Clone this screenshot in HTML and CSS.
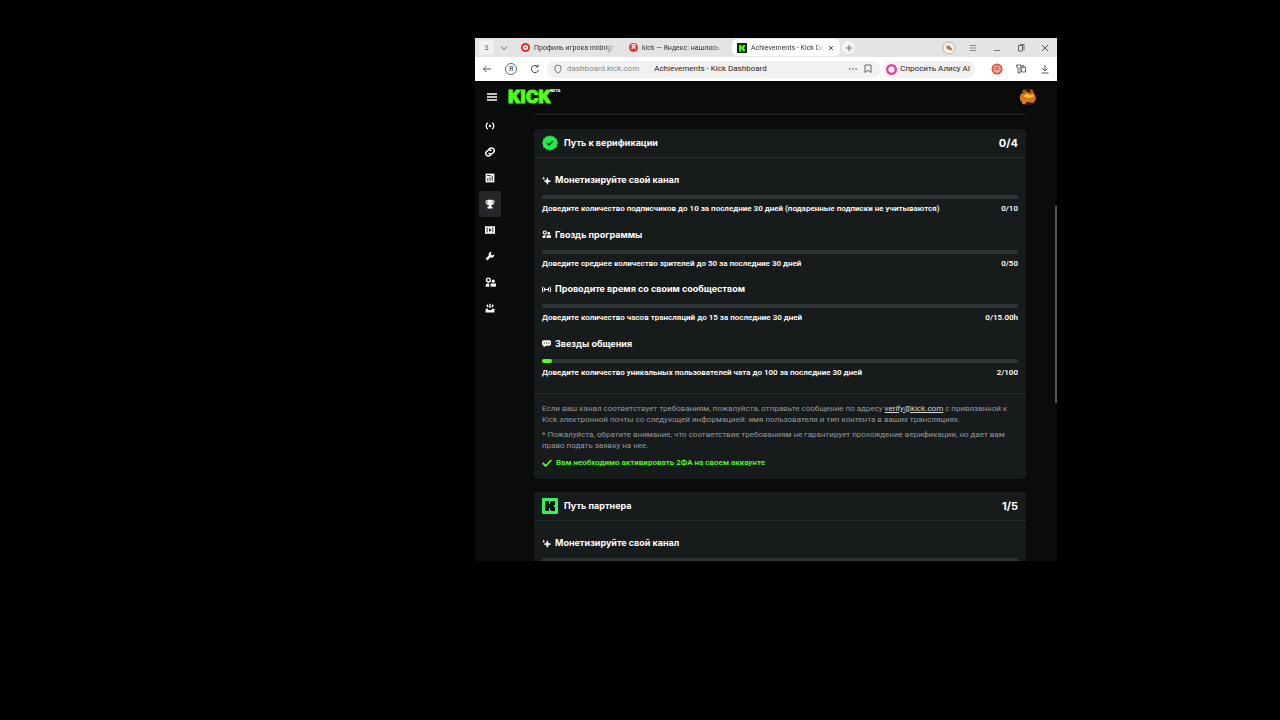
FILE: index.html
```html
<!DOCTYPE html>
<html lang="ru">
<head>
<meta charset="utf-8">
<title>Achievements - Kick Dashboard</title>
<link rel="stylesheet" href="styles.css">
</head>
<body>
<svg class="defs" aria-hidden="true">
  <symbol id="spark" viewBox="0 0 16 16"><path d="M9.500 3l1.600 4.400L15.500 9l-4.400 1.600L9.500 15l-1.600-4.400L3.500 9l4.400-1.600z" fill="currentColor" stroke="currentColor"/><path d="M3 1l.8 2.200L6 4l-2.200.8L3 7l-.8-2.200L0 4l2.200-.8z" fill="currentColor"/></symbol>
  <symbol id="people" viewBox="0 0 16 16"><circle cx="5" cy="4.500" r="2.800" fill="none" stroke="currentColor" stroke-width="2"/><path d="M1 14v-2c0-1.700 1.200-2.700 3-2.700h2V14z" fill="currentColor"/><circle cx="12" cy="6" r="2.300" fill="currentColor"/><path d="M8 9.500h8V14H8z" fill="currentColor"/></symbol>
  <symbol id="live" viewBox="0 0 16 16"><path d="M4.500 3C1 5 1 11 4.500 13M11.500 3c3.500 2 3.500 8 0 10" fill="none" stroke="currentColor" stroke-width="2"/><path d="M5.500 8L8 5.500 10.500 8 8 10.500z" fill="currentColor"/></symbol>
  <symbol id="waves" viewBox="0 0 16 16"><path d="M2 3c-1.300 3-1.300 7 0 10M5 5c-.8 2-.8 4 0 6M14 3c1.300 3 1.300 7 0 10M11 5c.8 2 .8 4 0 6M5 8h6" fill="none" stroke="currentColor" stroke-width="1.800"/></symbol>
  <symbol id="mark" viewBox="0 0 16 16"><rect width="16" height="16" rx="1" fill="#33f35b"/><path d="M3 3h4v3h1V4h1V3h4v4h-1v2h1v4H9v-1H8v-2H7v3H3z" fill="#08120c"/></symbol>
</svg>
<div class="stage">
<div class="window">
  <div class="tabs">
    <button class="count">3</button>
    <button class="chev" aria-label="Вкладки"><svg width="8" height="8" viewBox="0 0 8 8"><path d="M1 2.500l3 3 3-3" fill="none" stroke="#666"/></svg></button>
    <a class="tab" href="#"><svg width="9" height="9" viewBox="0 0 9 9"><circle cx="4.500" cy="4.500" r="3.500" fill="#fff" stroke="#e02d31" stroke-width="2"/><circle cx="4.500" cy="4.500" r="1" fill="#e02d31"/></svg><span>Профиль игрока midnight</span></a>
    <a class="tab" href="#"><i class="ya">Я</i><span>kick — Яндекс: нашлось 1</span></a>
    <div class="tab active"><svg width="10" height="10" viewBox="0 0 10 10"><rect width="10" height="10" fill="#10260c"/><path d="M2 2h2.500v2H5V3h1V2h2v2H7v2h1v2.500H6v-1H5V6h-.5v2.500H2z" fill="#42f51f"/></svg><a href="#">Achievements - Kick Da</a><button aria-label="Закрыть вкладку"><svg width="6" height="6" viewBox="0 0 6 6"><path d="M1 1l4 4M5 1L1 5" stroke="#555"/></svg></button></div>
    <button class="plus" aria-label="Новая вкладка"><svg width="8" height="8" viewBox="0 0 8 8"><path d="M4 1v6M1 4h6" stroke="#666"/></svg></button>
    <div class="controls">
      <button aria-label="Профиль"><svg width="14" height="14" viewBox="0 0 14 14"><circle cx="7" cy="7" r="6" fill="#f7f4f0" stroke="#bbb3b6"/><path d="M4 5l3-.5L10.500 8 9 9.500 5 8z" fill="#ad7a4b"/></svg></button>
      <button aria-label="Меню"><svg width="8" height="8" viewBox="0 0 8 8"><path d="M1 1.500h6M1 4h6M1 6.500h6" stroke="#888"/></svg></button>
      <button aria-label="Свернуть"><svg width="8" height="8" viewBox="0 0 8 8"><path d="M1 6.500h6" stroke="#777"/></svg></button>
      <button aria-label="Развернуть"><svg width="8" height="8" viewBox="0 0 8 8"><path d="M1.500 1.500h4v5.500h-4zM3 .5h4V6" fill="none" stroke="#666"/></svg></button>
      <button aria-label="Закрыть"><svg width="8" height="8" viewBox="0 0 8 8"><path d="M1 1l6 6M7 1L1 7" stroke="#555"/></svg></button>
    </div>
  </div>
  <div class="toolbar">
    <div class="nav">
      <button aria-label="Назад"><svg width="10" height="10" viewBox="0 0 10 10"><path d="M9 5H1.500M4.500 2l-3 3 3 3" fill="none" stroke="#555"/></svg></button>
      <button aria-label="Яндекс" class="home">Я</button>
      <button aria-label="Обновить"><svg width="10" height="10" viewBox="0 0 10 10"><path d="M8.500 6A3.600 3.600 0 1 1 7.500 2.400M8 .5v2.500H5.500" fill="none" stroke="#444"/></svg></button>
    </div>
    <div class="address">
      <svg width="8" height="10" viewBox="0 0 8 10"><path d="M4 1l3 1v3.500Q6.500 8 4 9 1.500 8 1 5.500V2z" fill="none" stroke="#777"/></svg>
      <span class="url">dashboard.kick.com</span><span class="pagetitle">Achievements - Kick Dashboard</span>
      <button class="dots" aria-label="Ещё"><svg width="10" height="4" viewBox="0 0 10 4"><path d="M1 2h1.500M4.300 2h1.500M7.500 2H9" stroke="#777" stroke-width="1.300"/></svg></button>
      <button aria-label="Закладка"><svg width="8" height="10" viewBox="0 0 8 10"><path d="M1 1h6v7.500L4 6.300 1 8.500z" fill="none" stroke="#666"/></svg></button>
    </div>
    <button class="alice"><svg width="11" height="11" viewBox="0 0 11 11"><circle cx="5.500" cy="5.500" r="4.300" fill="#fff" stroke="#eb3f9b" stroke-width="2.400"/></svg>Спросить Алису AI</button>
    <div class="tools">
      <button aria-label="Расширение"><svg width="12" height="12" viewBox="0 0 12 12"><circle cx="6" cy="6" r="5.500" fill="#e8533f"/><rect x="3" y="3" width="6" height="6" rx="2" fill="none" stroke="#ffd2c7"/><path d="M4.500 5.500h1M6.500 5.500h1M4.500 7.500h3" stroke="#fff" stroke-width=".8"/></svg></button>
      <button aria-label="Расширения"><svg width="10" height="10" viewBox="0 0 10 10"><path d="M.5 1h4.500v2L4 3.500V9H2V3.500L.5 3zM6 3V1.500h2V3M5.500 3.500h4V8h-4z" fill="none" stroke="#555" stroke-width=".9"/></svg></button>
      <button aria-label="Загрузки"><svg width="10" height="10" viewBox="0 0 10 10"><path d="M5 1v6M2.500 4.500L5 7l2.500-2.500M1.500 9h7" fill="none" stroke="#555"/></svg></button>
    </div>
  </div>
  <div class="app">
    <header class="top">
      <button class="burger" aria-label="Меню"><svg width="10" height="8" viewBox="0 0 10 8"><path d="M0 1h10M0 4h10M0 7h10" stroke="#fff" stroke-width="1.300"/></svg></button>
      <a class="logo" href="#">KICK<sup>BETA</sup></a>
      <button class="avatar" aria-label="Аккаунт"><svg width="18" height="18" viewBox="0 0 18 18"><circle cx="9" cy="9" r="8.500" fill="#3a1807"/><path d="M1 8q1-3 4-3l2-2 3 2 4-1 2 4 1 3-3 4-5-1-5 1-3-3z" fill="#d97813"/><path d="M4 8l4-2 3 1 4 0-1 2-4 1-4-1z" fill="#ffbd43"/><circle cx="5" cy="3" r="1.500" fill="#a96b35"/><circle cx="12.500" cy="3" r="1.500" fill="#b5651b"/><circle cx="5" cy="14.500" r="2" fill="#b88754"/></svg></button>
    </header>
    <nav class="side">
      <a href="#" aria-label="Трансляция"><svg width="10" height="10"><use href="#live"/></svg></a>
      <a href="#" aria-label="Ссылки"><svg width="10" height="10" viewBox="0 0 16 16"><g fill="none" stroke="currentColor" stroke-width="2.400"><path d="M6 4l1.500-1.300a4.200 4.200 0 0 1 6 6L11.500 10.500a3.500 3.500 0 0 1-5.500-1"/><path d="M10 12l-1.500 1.300a4.200 4.200 0 0 1-6-6L4.500 5.500a3.500 3.500 0 0 1 5.500 1"/></g></svg></a>
      <a href="#" aria-label="Аналитика"><svg width="10" height="10" viewBox="0 0 16 16"><path d="M1 1h14v14H1z" fill="currentColor"/><path d="M4.500 8v5M8 6v7M11.500 4v9M3 4h6" stroke="#0b0c0d" stroke-width="1.300"/></svg></a>
      <a href="#" aria-label="Достижения" class="on"><svg width="10" height="10" viewBox="0 0 16 16"><path d="M4 1h8v1.500h3V6q0 2.500-3.300 3L9.500 10.500V12H12v3H4v-3h2.500v-1.500L4.300 9Q1 8.500 1 6V2.500h3zM2.500 4v2q0 1 1.500 1.200V4zM12 4v3.200q1.500-.2 1.500-1.200V4z" fill="currentColor"/></svg></a>
      <a href="#" aria-label="Видео"><svg width="10" height="10" viewBox="0 0 16 16"><path d="M0 2h16v12H0z" fill="currentColor"/><path d="M3.500 4v8M12.500 4v8" stroke="#0b0c0d" stroke-width="1.300"/><path d="M6.500 5v6L10.500 8z" fill="#0b0c0d"/></svg></a>
      <a href="#" aria-label="Настройки"><svg width="10" height="10" viewBox="0 0 16 16"><path d="M10.500 1L9 5l2 2 4-1.500q.3 4-3 5-2 .5-3.500-.5L4 15l-3-3 5-4.500Q5 5.500 6.500 3 8 1 10.500 1z" fill="currentColor"/></svg></a>
      <a href="#" aria-label="Сообщество"><svg width="11" height="11"><use href="#people"/></svg></a>
      <a href="#" aria-label="Кампании"><svg width="10" height="10" viewBox="0 0 16 16"><path d="M1 9h4v2h6V9h4v6H1zM7 1h2v7H7zM2 3l2-1 2 4-2 1zM14 3l-2-1-2 4 2 1z" fill="currentColor"/></svg></a>
    </nav>
    <main class="content">
      <div class="previous"></div>
      <section class="card">
        <div class="head"><svg width="16" height="16" viewBox="0 0 16 16"><path d="M8 .3l1.700 1.300 2.100-.4 1 1.900 2.100.7-.1 2.200L16 8l-1.200 2 .1 2.200-2.100.7-1 1.900-2.100-.4L8 15.700l-1.700-1.300-2.100.4-1-1.900-2.100-.7.100-2.200L0 8l1.200-2-.1-2.200 2.100-.7 1-1.900 2.100.4z" fill="#27eb4d"/><path d="M5 8l2 2 4-4" fill="none" stroke="#0b3f1c" stroke-width="1.500"/></svg><h2>Путь к верификации</h2><strong>0/4</strong></div>
        <div class="goals">
          <div class="goal"><h3><svg width="9" height="9"><use href="#spark"/></svg>Монетизируйте свой канал</h3><div class="bar"></div><p><span>Доведите количество подписчиков до 10 за последние 30 дней (подаренные подписки не учитываются)</span><b>0/10</b></p></div>
          <div class="goal"><h3><svg width="9" height="9"><use href="#people"/></svg>Гвоздь программы</h3><div class="bar"></div><p><span>Доведите среднее количество зрителей до 50 за последние 30 дней</span><b>0/50</b></p></div>
          <div class="goal"><h3><svg width="9" height="9"><use href="#waves"/></svg>Проводите время со своим сообществом</h3><div class="bar"></div><p><span>Доведите количество часов трансляций до 15 за последние 30 дней</span><b>0/15.00h</b></p></div>
          <div class="goal"><h3><svg width="9" height="9" viewBox="0 0 16 16"><path d="M3 2h10q3 0 3 3v4q0 3-3 3H7l-4 3v-3q-3 0-3-3V5q0-3 3-3z" fill="currentColor"/><path d="M3 7h2M7 7h2M11 7h2" stroke="#181c1c" stroke-width="2"/></svg>Звезды общения</h3><div class="bar"><div class="fill" style="width:2%"></div></div><p><span>Доведите количество уникальных пользователей чата до 100 за последние 30 дней</span><b>2/100</b></p></div>
        </div>
        <div class="notes">
          <p>Если ваш канал соответствует требованиям, пожалуйста, отправьте сообщение по адресу <a href="mailto:verify@kick.com">verify@kick.com</a> с привязанной к Kick электронной почты со следующей информацией: имя пользователя и тип контента в ваших трансляциях.</p>
          <p>* Пожалуйста, обратите внимание, что соответствие требованиям не гарантирует прохождение верификации, но дает вам право подать заявку на нее.</p>
          <p class="ok"><svg width="10" height="10" viewBox="0 0 10 10"><path d="M.7 5l3 3 5.600-6" fill="none" stroke="currentColor" stroke-width="1.800"/></svg>Вам необходимо активировать 2ФА на своем аккаунте</p>
        </div>
      </section>
      <section class="card">
        <div class="head"><svg width="16" height="16"><use href="#mark"/></svg><h2>Путь партнера</h2><strong>1/5</strong></div>
        <div class="goals"><div class="goal"><h3><svg width="9" height="9"><use href="#spark"/></svg>Монетизируйте свой канал</h3><div class="bar"></div></div></div>
      </section>
    </main>
    <div class="thumb"></div>
  </div>
</div>
</div>
</body>
</html>
```
FILE: styles.css
```css
* { box-sizing: border-box; }
body, h2, h3, p { margin: 0; }
body { background: #000; font-family: Inter, "Noto Sans", sans-serif; }
button { border: 0; padding: 0; background: none; font: inherit; color: inherit; display: flex; align-items: center; justify-content: center; }
a { color: inherit; text-decoration: none; }
svg { flex: none; display: block; }
.defs { position: absolute; width: 0; height: 0; }
.stage { display: grid; height: 100vh; grid-template-columns: 475fr minmax(0, 582fr) 223fr; grid-template-rows: 38fr minmax(0, 523fr) 159fr; }
.window { grid-area: 2 / 2; display: flex; flex-direction: column; overflow: hidden; background: #fff; }

.tabs { display: flex; align-items: center; height: 19px; flex: none; background: #e4e4e4; color: #333; font: 7px/16px Roboto, sans-serif; padding-left: 4px; }
.count { width: 15px; height: 15px; border-radius: 4px; background: #f1f1f1; color: #555; }
.chev { width: 20px; }
.tab { display: flex; align-items: center; gap: 4px; width: 108px; height: 17px; padding: 0 7px; }
.tab span, .tab a { flex: 1; min-width: 0; overflow: hidden; white-space: nowrap; mask-image: linear-gradient(to right, #000 88%, transparent); }
.ya { width: 9px; height: 9px; border-radius: 50%; background: #e5333a; color: #fff; font: bold 7px/9px Roboto, sans-serif; text-align: center; flex: none; }
.tab.active { background: #fff; border-radius: 5px; margin-left: 2px; padding: 0 6px 0 5px; }
.plus { width: 13px; height: 13px; border-radius: 50%; background: #f4f4f4; margin-left: 2px; }
.controls { display: flex; margin-left: auto; }
.controls button { width: 24px; }

.toolbar { display: flex; align-items: center; height: 24px; flex: none; background: #fff; color: #222; font: 8px/14px Roboto, sans-serif; }
.nav { display: flex; align-items: center; }
.nav button { width: 24px; }
.nav .home::before { content: ""; position: absolute; width: 10px; height: 10px; border: 1px solid #666; border-radius: 50%; }
.nav .home { font-size: 7px; }
.address { display: flex; align-items: center; flex: 1; height: 17px; background: #f1f1f1; border-radius: 8px; padding: 0 8px 0 7px; white-space: nowrap; }
.url { color: #888; margin: 0 15px 0 5px; }
.address button + button { margin-left: 6px; }
.dots { margin-left: auto; }
.alice { height: 17px; border-radius: 8px; background: #f1f1f1; gap: 3px; padding: 0 5px 0 3px; margin-left: 3px; }
.tools { display: flex; margin-left: 10px; }
.tools button { width: 24px; }

.app { position: relative; flex: 1; min-height: 0; display: grid; grid-template-columns: 31px minmax(0, 1fr); grid-template-rows: 32px minmax(0, 1fr); background: #0a0b0b; color: #fff; }
.top { grid-column: 1 / -1; display: flex; align-items: center; padding: 0 20px 0 12px; }
.logo { display: flex; align-items: flex-start; margin-left: 11px; color: #53fc18; font-family: Roboto, sans-serif; font-size: 19px; font-weight: 900; line-height: 18px; -webkit-text-stroke: 1px #53fc18; }
.logo sup { font-size: 4px; line-height: 6px; color: #fff; -webkit-text-stroke: 0; }
.avatar { margin-left: auto; }
.side { display: flex; flex-direction: column; padding: 0 5px 0 4px; }
.side a { display: flex; align-items: center; justify-content: center; height: 26px; border-radius: 2px; }
.side .on { background: #24272a; }
.content { display: flex; flex-direction: column; padding: 0 31px 0 28px; overflow: hidden; }
.previous { height: 2px; flex: none; background: #181c1c; margin-bottom: 14px; border-radius: 0 0 3px 3px; }
.card { flex: none; background: #171b1b; border-radius: 3px; margin-bottom: 13px; }
.head { display: flex; align-items: center; gap: 6px; height: 29px; padding: 0 8px; border-bottom: 1px solid #24292b; }
.head h2 { font-size: 9px; line-height: 14px; font-weight: 700; }
.head strong { margin-left: auto; font-size: 11px; line-height: 16px; font-weight: 700; }
.goals { display: flex; flex-direction: column; justify-content: space-between; padding: 15px 8px 14px; }
.card:first-of-type .goals { min-height: 235px; }
.goal h3 { display: flex; align-items: center; gap: 4px; font-size: 9px; line-height: 14px; font-weight: 700; }
.bar { height: 4px; margin: 8px 0 4px; border-radius: 2px; background: #303436; }
.fill { height: 100%; border-radius: 2px; background: #53fc18; }
.goal p { display: flex; justify-content: space-between; font: 600 8px/12px Roboto, sans-serif; }
.goal b { font-weight: 600; }
.notes { border-top: 1px solid #24292b; padding: 9px 8px 10px; color: #94999e; font: 8px/11px Roboto, sans-serif; }
.notes p + p { margin-top: 4px; }
.notes a { color: #d5d8da; text-decoration: underline; }
.notes .ok { display: flex; align-items: center; gap: 4px; margin-top: 6px; line-height: 12px; font-weight: 600; color: #53fc18; }
.thumb { position: absolute; right: 0; top: 26%; width: 2px; height: 41%; border-radius: 1px; background: #55585a; }
```
